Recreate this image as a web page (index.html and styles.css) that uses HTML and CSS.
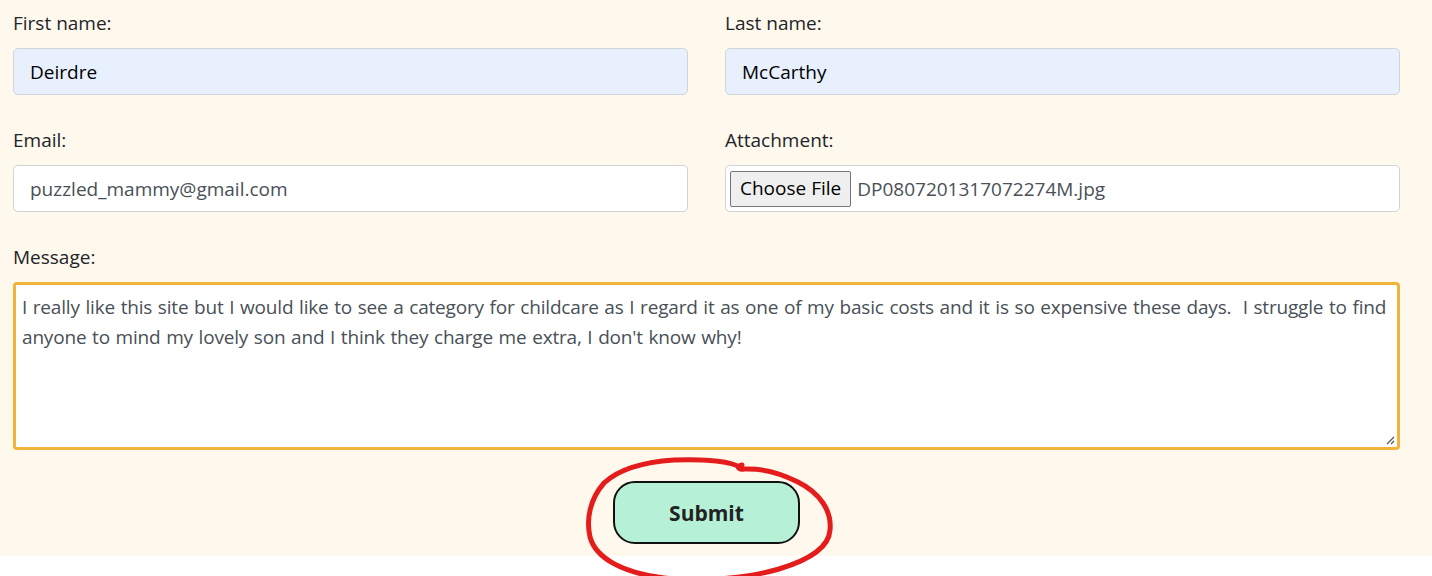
FILE: index.html
```html
<!DOCTYPE html>
<html lang="en">
<head>
<meta charset="utf-8">
<title>Contact</title>
<link rel="stylesheet" href="styles.css">
</head>
<body>
<form class="contact">
  <div class="row">
    <div class="field">
      <label class="label">First name:</label>
      <div class="control autofill">Deirdre</div>
    </div>
    <div class="field">
      <label class="label">Last name:</label>
      <div class="control autofill">McCarthy</div>
    </div>
  </div>
  <div class="row">
    <div class="field">
      <label class="label">Email:</label>
      <div class="control plain">puzzled_mammy@gmail.com</div>
    </div>
    <div class="field">
      <label class="label">Attachment:</label>
      <div class="control file">
        <span class="file-btn">Choose File</span>
        <span class="file-name">DP0807201317072274M.jpg</span>
      </div>
    </div>
  </div>
  <div class="field wide">
    <label class="label">Message:</label>
    <div class="textarea">I really like this site but I would like to see a category for childcare as I regard it as one of my basic costs and it is so expensive these days.&nbsp; I struggle to find anyone to mind my lovely son and I think they charge me extra, I don't know why!<svg class="grip" width="9" height="9" viewBox="0 0 9 9"><path d="M8 1 L1 8 M8 5 L5 8" stroke="#555" stroke-width="1.2"/></svg></div>
  </div>
  <div class="actions">
    <div class="submit-wrap">
      <button type="button" class="submit">Submit</button>
      <svg class="scribble" width="260" height="130" viewBox="0 0 260 130">
        <path d="M158 14 C150 6 120 4 90 5 C60 7 35 14 20 28 C6 44 2 64 6 82 C12 104 40 118 80 123 C115 127 160 124 195 114 C225 105 245 92 246 75 C248 56 236 38 214 27 C196 18 178 13 160 14 C154 15 152 11 158 10" fill="none" stroke="#e41c1c" stroke-width="5" stroke-linecap="round" stroke-linejoin="round"/>
      </svg>
    </div>
  </div>
</form>
</body>
</html>
```

FILE: styles.css
```css
html, body {
  margin: 0;
  padding: 0;
  background: #ffffff;
}

body {
  font-family: "Open Sans", "Noto Sans", sans-serif;
  color: #212529;
  font-size: 19px;
  line-height: 30px;
  min-height: 576px;
}

.contact {
  background: #fff8ec;
  padding: 8px 32px 11px 13px;
  height: 556px;
  box-sizing: border-box;
}

.row {
  display: grid;
  grid-template-columns: 1fr 1fr;
  column-gap: 37px;
}

.field {
  display: flex;
  flex-direction: column;
  margin-bottom: 30px;
}

.field.wide {
  margin-bottom: 31px;
}

.label {
  display: block;
  margin-bottom: 10px;
  color: #212529;
}

.control {
  height: 47px;
  box-sizing: border-box;
  border: 1px solid #ced4da;
  border-radius: 5px;
  padding: 0 16px;
  display: flex;
  align-items: center;
  background: #ffffff;
  color: #495057;
}

.control.autofill {
  background: #e8f0fe;
  color: #000000;
}

.control.file {
  padding: 0 4px;
  gap: 6px;
}

.file-btn {
  background: #efefef;
  border: 1px solid #767676;
  border-radius: 2px;
  color: #000;
  height: 36px;
  box-sizing: border-box;
  padding: 0 9px;
  display: flex;
  align-items: center;
  line-height: 1;
}

.file-name {
  color: #495057;
}

.textarea {
  position: relative;
  height: 168px;
  box-sizing: border-box;
  border: 3px solid #f0b43a;
  border-radius: 4px;
  background: #ffffff;
  padding: 7px 6px;
  color: #495057;
  word-spacing: 0.9px;
  letter-spacing: -0.18px;
}

.grip {
  position: absolute;
  right: 2px;
  bottom: 2px;
}

.actions {
  display: flex;
  justify-content: center;
}

.submit-wrap {
  position: relative;
}

.submit {
  font-family: "Open Sans", "Noto Sans", sans-serif;
  font-weight: 700;
  font-size: 21px;
  color: #222222;
  background: #b6f1d7;
  border: 2px solid #111111;
  border-radius: 22px;
  width: 187px;
  height: 63px;
  cursor: pointer;
}

.scribble {
  position: absolute;
  left: -29px;
  top: -26px;
  pointer-events: none;
}
```
